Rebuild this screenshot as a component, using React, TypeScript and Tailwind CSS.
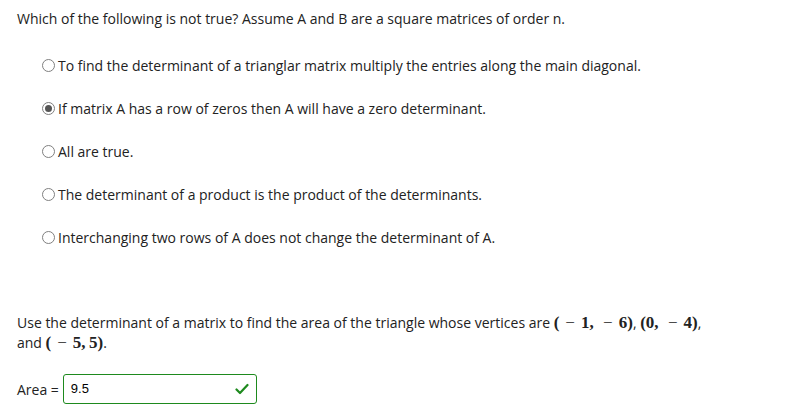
import React from "react";

const options = [
  "To find the determinant of a trianglar matrix multiply the entries along the main diagonal.",
  "If matrix A has a row of zeros then A will have a zero determinant.",
  "All are true.",
  "The determinant of a product is the product of the determinants.",
  "Interchanging two rows of A does not change the determinant of A.",
];

function Radio({ checked }: { checked: boolean }) {
  return (
    <span className="w-[13px] h-[13px] rounded-full border border-[#808080] bg-white flex items-center justify-center shrink-0">
      {checked && <span className="w-[7px] h-[7px] rounded-full bg-[#555]" />}
    </span>
  );
}

function M({ children }: { children: React.ReactNode }) {
  return <span className="font-['Liberation_Serif',serif] font-bold text-[17px]">{children}</span>;
}

function Neg() {
  return <span className="font-normal inline-block mx-[6px]">−</span>;
}

export default function App() {
  return (
    <div className="w-[810px] h-[414px] bg-white text-[#222] text-[14px] font-['Open_Sans',sans-serif] px-[17px] pt-[9px]">
      <p className="leading-[20px]">Which of the following is not true? Assume A and B are a square matrices of order n.</p>
      <div className="pl-[25px] pt-[15px]">
        {options.map((o, i) => (
          <label key={i} className="flex items-center gap-[3px] h-[43px] leading-[20px]">
            <Radio checked={i === 1} />
            <span>{o}</span>
          </label>
        ))}
      </div>
      <p className="leading-[20px] mt-[54px]">
        Use the determinant of a matrix to find the area of the triangle whose vertices are{" "}
        <M>(<Neg />1,&thinsp;<Neg />6)</M>, <M>(0,&thinsp;<Neg />4)</M>,
        <br />
        and <M>(<Neg />5,&thinsp;5)</M>.
      </p>
      <div className="flex items-center mt-[21px] gap-[4px]">
        <span>Area =</span>
        <div className="w-[194px] h-[30px] border border-[#1e8a1e] rounded-[3px] flex items-center justify-between px-[7px]">
          <span className="text-[13px] font-['Liberation_Sans',sans-serif] text-black">9.5</span>
          <svg width="14" height="12" viewBox="0 0 14 12" fill="none">
            <path d="M1.5 6.5 L5 10 L12.5 2" stroke="#1e8a1e" strokeWidth="2.2" strokeLinecap="round" strokeLinejoin="round" />
          </svg>
        </div>
      </div>
    </div>
  );
}
